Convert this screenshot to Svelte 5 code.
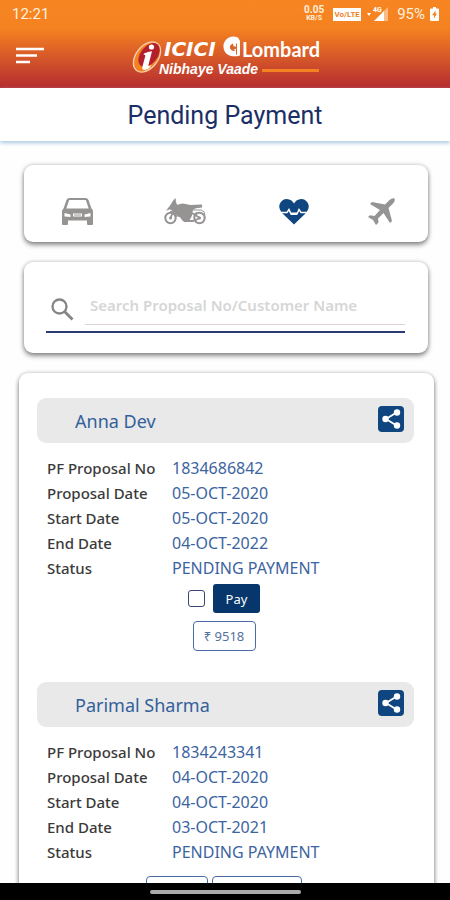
<script>
  let query = $state('');
  let category = $state('Health');
  const categories = ['Car', 'Two wheeler', 'Health', 'Travel'];

  const proposals = [
    {
      name: 'Anna Dev',
      payable: true,
      amount: '₹ 9518',
      rows: [
        ['PF Proposal No', '1834686842'],
        ['Proposal Date', '05-OCT-2020'],
        ['Start Date', '05-OCT-2020'],
        ['End Date', '04-OCT-2022'],
        ['Status', 'PENDING PAYMENT']
      ]
    },
    {
      name: 'Parimal Sharma',
      payable: false,
      rows: [
        ['PF Proposal No', '1834243341'],
        ['Proposal Date', '04-OCT-2020'],
        ['Start Date', '04-OCT-2020'],
        ['End Date', '03-OCT-2021'],
        ['Status', 'PENDING PAYMENT']
      ]
    }
  ];
</script>

<div class="app">
  <header class="top">
    <div class="status">
      <span class="clock">12:21</span>
      <span class="speed"><b>0.05</b><small>KB/S</small></span>
      <span class="volte">Vo/LTE</span>
      <svg class="signal" width="22" height="16" viewBox="0 0 22 16" aria-hidden="true">
        <path d="M0 7h4l-2 3z" fill="#fff" />
        <path d="M7 15L17 5v10z" fill="#fff" />
        <path d="M17 5l4-4v14h-4z" fill="#fff" opacity=".45" />
        <text x="6" y="6" font-size="7" font-weight="700" fill="#fff">4G</text>
      </svg>
      <span class="percent">95%</span>
      <svg width="9" height="14" viewBox="0 0 9 14" aria-hidden="true">
        <path d="M3 0h3v1.500h2q1 0 1 1V13q0 1-1 1H1q-1 0-1-1V2.500q0-1 1-1h2z" fill="#fff" />
        <path d="M5.500 3.500L2 8.300h2v3.200l3-4.800H5.500z" fill="#f58220" />
      </svg>
    </div>
    <div class="brand">
      <button class="menu" aria-label="Menu">
        <svg width="28" height="18" viewBox="0 0 28 18"><path d="M0 2h28M0 8.500h21M0 15h14" stroke="#fff" stroke-width="2.600" /></svg>
      </button>
      <svg class="logo" width="200" height="46" viewBox="0 0 200 46" role="img" aria-label="ICICI Lombard Nibhaye Vaade">
        <ellipse cx="15" cy="24" rx="11" ry="17" transform="rotate(38 15 24)" fill="#f58220" stroke="#f7cfae" stroke-width="1.300" />
        <ellipse cx="17" cy="22" rx="8.500" ry="13.500" transform="rotate(38 17 22)" fill="#b3202c" />
        <circle cx="19.500" cy="14" r="2.600" fill="#fff" />
        <path d="M12 20.500q4-2 8-2.200l-3.600 14q-.3 1.500 3-.2-2.500 4.400-6.500 4.800-3.300.1-2.500-3.200l2.900-10.800q.3-1.600-1.700-1.100z" fill="#fff" />
        <text x="32" y="23" class="icici">ICICI</text>
        <path d="M106 4.500C97 1 91 8 91.500 14c.5 8 8 11 16.500 8.500V8z" fill="#fff" />
        <path d="M101 10.500q-4 1.500-3 5 2 3.500 5.500 2l-2-1q3-.5 3-2.500l-3-1z" fill="#dc672a" />
        <path d="M104.500 10.500v11" stroke="#dc672a" stroke-width="1" />
        <text x="110" y="24" class="lombard">Lombard</text>
        <text x="27" y="41" class="tagline">Nibhaye Vaade</text>
        <path d="M130 37.500h57" stroke="#f58220" stroke-width="3" />
      </svg>
    </div>
  </header>

  <h1>Pending Payment</h1>

  <main>
    <nav class="card kinds" aria-label="Policy type">
      {#each categories as item}
        <button aria-label={item} class:active={category === item} onclick={() => (category = item)}>
          {#if item === 'Car'}
            <svg width="31" height="27" viewBox="0 0 31 27">
              <path fill="currentColor" fill-rule="evenodd" d="M7.500 0h16q2.200 0 3 2l3 8.500q1.500 1 1.500 3V26q0 1-1 1h-4q-1 0-1-1v-3.500H6V26q0 1-1 1H1q-1 0-1-1V13.500q0-2 1.500-3L4.500 2q.8-2 3-2zM7.200 2L4.300 10.500h22.400L23.800 2zM2.500 15v3.500l6 .5v-2.500zM28.500 15l-6 1.500V19l6-.5zM11 15.500v3h9v-3z" />
              <path d="M12 17h7" stroke="currentColor" stroke-width="1" />
            </svg>
          {:else if item === 'Two wheeler'}
            <svg width="42" height="27" viewBox="0 0 42 27">
              <g fill="none" stroke="currentColor"><circle cx="6.500" cy="20" r="5.200" stroke-width="2" /><circle cx="35.500" cy="20" r="5.200" stroke-width="2" /><path d="M6.500 20L11 9M12 19q-1-5-6-5M20 23h9l7-3M28 15l8 5" stroke-width="1.800" /><path d="M29 12h8q4 1 4 5M29 17l4-3" stroke-width="1" /></g>
              <path fill="currentColor" d="M9.500 2l2-2 .5 4.500 1.500 2.500q4-2.500 8-1l5 1 11-.5q1 0 .5 3l-6 .8-3 1.500-1 6-3 5.500q-3 1-6 0l-3-4-3-1-3-4-4-3-4 1.500L6 7.500z" />
              <circle cx="6.500" cy="20" r="1.500" fill="currentColor" /><circle cx="35.500" cy="20" r="1.500" fill="currentColor" />
            </svg>
          {:else if item === 'Health'}
            <svg width="30" height="26" viewBox="0 0 30 26">
              <path fill="currentColor" d="M15 25.500L2.500 13.500Q-1.500 8 1.500 3.500 4.500-.5 9 .2q4 .6 6 4.300Q17 .8 21 .2q4.500-.7 7.500 3.300 3 4.500-1 10z" />
              <path d="M1 13.500h7l2-3 2 4.500h6l2-4.500 2 3h7" fill="none" stroke="#fff" stroke-width="1.500" />
              <path d="M12 13.500h6v2.500h-6z" fill="#fff" />
            </svg>
          {:else}
            <svg width="27" height="27" viewBox="0 0 27 27">
              <path fill="currentColor" d="M26.500.5q1.200 2-1.500 5L20.500 10 24 23l-2 2-6.500-10-5.500 5.500.5 4L8 27l-3-5-5-3 2-1.700 4.500.7L12 12 2 6l2-2 13 2.500L21.500 2q3-2.700 5-1.500z" />
            </svg>
          {/if}
        </button>
      {/each}
    </nav>

    <section class="card search">
      <label class="field">
        <svg width="23" height="23" viewBox="0 0 23 23" aria-hidden="true"><circle cx="8.500" cy="8.500" r="7" fill="none" stroke="#858585" stroke-width="2.300" /><path d="M13.500 13.500l8 8" stroke="#858585" stroke-width="2.800" /></svg>
        <input type="text" bind:value={query} aria-label="Search" placeholder="Search Proposal No/Customer Name" />
      </label>
    </section>

    <section class="card list">
      {#each proposals as item}
        <article>
          <div class="name">
            <h2>{item.name}</h2>
            <button class="share" aria-label="Share {item.name}">
              <svg width="26" height="26" viewBox="0 0 26 26"><path d="M18.500 6.500L8 13l10.500 6.500" fill="none" stroke="#fff" stroke-width="1.800" /><circle cx="19" cy="6.500" r="3.200" fill="#fff" /><circle cx="7.500" cy="13" r="3.200" fill="#fff" /><circle cx="19" cy="19.500" r="3.200" fill="#fff" /></svg>
            </button>
          </div>
          <dl>
            {#each item.rows as [key, value]}
              <dt>{key}</dt>
              <dd>{value}</dd>
            {/each}
          </dl>
          {#if item.payable}
            <div class="pay">
              <input type="checkbox" aria-label="Select {item.name}" />
              <button class="solid">Pay</button>
            </div>
            <div class="amount"><button class="outline">{item.amount}</button></div>
          {:else}
            <div class="actions">
              <button class="outline short" aria-label="Pay"></button>
              <button class="outline long" aria-label="Details"></button>
            </div>
          {/if}
        </article>
      {/each}
    </section>
  </main>

  <footer><span></span></footer>
</div>

<style>
  :global(body) { margin: 0; background: #fff; }
  * { box-sizing: border-box; }
  button { padding: 0; border: 0; background: none; font: inherit; cursor: pointer; }
  svg { display: block; }
  .app {
    display: flex;
    flex-direction: column;
    height: 100vh;
    overflow: hidden;
    background: #fefefe;
    font-family: 'Noto Sans', 'Open Sans', sans-serif;
  }
  .top {
    flex: none;
    height: 88px;
    background: linear-gradient(#f68522 0, #f58220 28px, #d85a29 56px, #b52c2f 100%);
    color: #fff;
  }
  .status {
    display: flex;
    align-items: center;
    height: 28px;
    padding: 0 11px 0 12px;
    font-family: Roboto, sans-serif;
    color: #fff0df;
  }
  .clock { margin-right: auto; font-size: 15px; }
  .speed { display: flex; flex-direction: column; align-items: center; margin-right: 9px; line-height: 8px; font-size: 10px; }
  .speed small { font-size: 7px; font-weight: 700; }
  .volte {
    width: 28px;
    height: 13px;
    margin-right: 6px;
    background: #fff;
    color: #f58220;
    font-size: 8px;
    font-weight: 700;
    line-height: 13px;
    text-align: center;
  }
  .signal { margin-right: 8px; }
  .percent { margin-right: 5px; font-size: 15px; }
  .brand { display: flex; align-items: center; height: 56px; padding-left: 16px; }
  .menu { width: 28px; margin-right: 88px; }
  .icici { font: italic 700 20px 'DejaVu Sans', sans-serif; fill: #fff; }
  .lombard { font: 700 20px Lato, sans-serif; fill: #fff; }
  .tagline { font: italic 700 14px 'Liberation Sans', sans-serif; fill: #fff; }
  h1 {
    flex: none;
    margin: 0;
    height: 53px;
    background: #fff;
    box-shadow: 0 2px 4px #a9c8de;
    color: #1b2f66;
    font: 400 25px/56px Roboto, sans-serif;
    text-align: center;
    z-index: 1;
  }
  main { flex: 1; min-height: 0; overflow: hidden; padding: 24px 22px 0 24px; }
  .card {
    border-radius: 9px;
    background: #fff;
    box-shadow: 0 3px 5px #0000006b, 0 0 4px #00000038;
  }
  .kinds {
    display: grid;
    grid-template-columns: 106fr 110fr 108fr 66fr;
    height: 77px;
    margin-bottom: 20px;
    padding: 16px 14px 0 0;
  }
  .kinds button { display: flex; align-items: center; justify-content: center; color: #969393; }
  .kinds .active { color: #0f467f; }
  .search { height: 91px; margin-bottom: 20px; padding: 23px 23px 0 22px; }
  .field { display: flex; align-items: center; height: 48px; padding: 0 0 6px 5px; border-bottom: 2px solid #2b3b73; }
  .field svg { margin: 8px 11px 0 0; flex: none; }
  .field input {
    flex: 1;
    min-width: 0;
    height: 40px;
    padding: 0 5px;
    border: 0;
    border-bottom: 1px solid #ddd3d3;
    outline: 0;
    background: none;
    color: #2b3b73;
    font: 600 15px 'Noto Sans', sans-serif;
  }
  .field input::placeholder { color: #d6d6d6; opacity: 1; }
  .list { margin: 0 -6px 0 -5px; padding: 25px 20px 40px 18px; }
  article { margin-bottom: 31px; }
  .name {
    display: flex;
    justify-content: space-between;
    height: 45px;
    padding: 8px 10px 0 38px;
    border-radius: 9px;
    background: #e9e9e9;
  }
  h2 { margin: 0; color: #33609b; font-size: 18px; font-weight: 400; line-height: 30px; }
  .share { width: 26px; height: 26px; border-radius: 4px; background: #0f467f; }
  dl {
    display: grid;
    grid-template-columns: 125px 1fr;
    margin: 13px 0 0 10px;
    font-size: 15px;
    line-height: 25px;
  }
  dt { color: #3a3a3a; font-weight: 500; }
  dd { margin: 0; color: #3c64a0; font-size: 16px; }
  .pay, .amount, .actions { display: flex; justify-content: center; padding-right: 3px; }
  .pay { align-items: center; gap: 8px; margin-top: 3px; }
  .pay input { appearance: none; width: 17px; height: 17px; margin: 0; border: 1px solid #3b4478; border-radius: 3px; }
  .solid { width: 47px; height: 29px; border-radius: 3px; background: #07366c; color: #fff; font-size: 13px; }
  .amount { margin-top: 8px; }
  .outline { width: 63px; height: 30px; border: 1px solid #4a6ba5; border-radius: 4px; color: #52719f; font-size: 13px; }
  .actions { gap: 4px; margin-top: 11px; }
  .short { width: 62px; }
  .long { width: 90px; }
  footer { flex: none; display: flex; align-items: center; justify-content: center; height: 17px; background: #000; z-index: 1; }
  footer span { width: 151px; height: 4px; border-radius: 2px; background: #ababab; }
</style>
